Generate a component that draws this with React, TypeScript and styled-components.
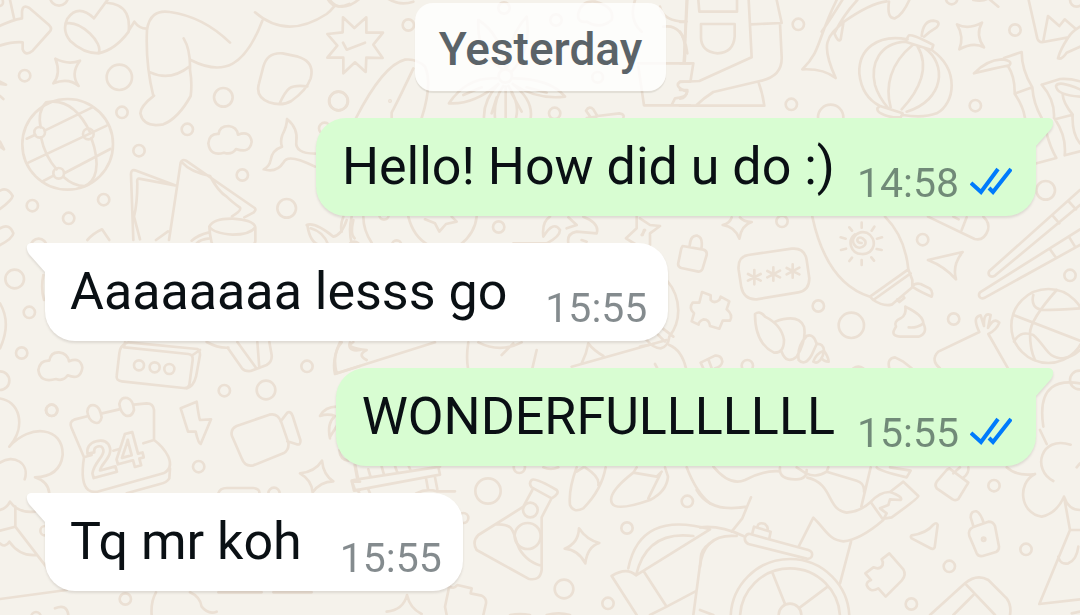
import React from 'react';
import styled, { createGlobalStyle } from 'styled-components';

const GlobalStyle = createGlobalStyle`
  *, *::before, *::after { box-sizing: border-box; }
  body {
    margin: 0;
    background: #f5f2eb;
    font-family: Roboto, "Liberation Sans", sans-serif;
  }
`;

const Screen = styled.main`
  position: relative;
  min-height: 100vh;
  overflow: hidden;
  padding: 3px 44px 23px 45px;
`;

const WallpaperArt = styled.svg`
  position: absolute;
  inset: 0;
  width: 100%;
  height: 100%;
  fill: none;
  stroke: #ebe0d4;
  stroke-width: 8;
  stroke-linecap: round;
  stroke-linejoin: round;
`;

const Thread = styled.div`
  position: relative;
  display: flex;
  flex-direction: column;
  gap: 27px;
`;

const DatePill = styled.h2`
  align-self: center;
  margin: 0;
  padding: 4px 24px 0;
  border-radius: 18px;
  background: rgba(255, 255, 255, 0.8);
  box-shadow: 0 2px 1px rgba(60, 45, 30, 0.1);
  color: #5b6368;
  font-size: 46px;
  font-weight: 500;
  line-height: 84px;
`;

const MessageList = styled.ol`
  display: flex;
  flex-direction: column;
  gap: 27px;
  margin: 0;
  padding: 0;
  list-style: none;
`;

const Bubble = styled.li<{ $sent: boolean }>`
  position: relative;
  display: flex;
  align-items: flex-start;
  align-self: ${(p) => (p.$sent ? 'flex-end' : 'flex-start')};
  gap: ${(p) => (p.$sent ? 22 : 38)}px;
  padding: ${(p) => (p.$sent ? '0 24px 0 26px' : '0 21px 0 25px')};
  border-radius: ${(p) => (p.$sent ? '30px 0 30px 30px' : '0 30px 30px 30px')};
  background: ${(p) => (p.$sent ? '#d8fdd2' : '#ffffff')};
  filter: drop-shadow(0 2px 1px rgba(60, 45, 30, 0.12));
`;

const TailShape = styled.svg<{ $sent: boolean }>`
  position: absolute;
  top: 0;
  width: 20px;
  height: 30px;
  fill: ${(p) => (p.$sent ? '#d8fdd2' : '#ffffff')};
  ${(p) => (p.$sent ? 'right: -18px;' : 'left: -19px; transform: scaleX(-1);')}
`;

const MessageText = styled.p`
  margin: 0;
  color: #0a1014;
  font-size: 52px;
  line-height: 98px;
  white-space: nowrap;
`;

const Meta = styled.div`
  display: flex;
  align-items: center;
  gap: 11px;
  padding-top: 41px;
`;

const Time = styled.time`
  color: rgba(10, 24, 30, 0.5);
  font-size: 41px;
  line-height: 48px;
`;

const Ticks = styled.svg`
  width: 42px;
  height: 28px;
  margin-bottom: 4px;
  fill: none;
  stroke: #007bfc;
  stroke-width: 4;
`;

const circle = (x: number, y: number, r: number) => (
  <circle key={`${x}-${y}`} cx={x} cy={y} r={r} />
);

type Dot = [number, number, number];

const Patch = ({ x, y, dots, paths }: { x: number; y: number; dots: Dot[]; paths: string[] }) => (
  <g transform={`translate(${x} ${y})`}>
    {dots.map(([cx, cy, r]) => circle(cx, cy, r))}
    {paths.map((d) => (
      <path key={d} d={d} />
    ))}
  </g>
);

const Wallpaper = () => (
  <WallpaperArt viewBox="0 0 3240 1845" preserveAspectRatio="xMinYMin slice" aria-hidden="true">
    {/* top left: stocking, globe, map, whale tail */}
    <Patch
      x={0}
      y={0}
      dots={[
        [177, -10, 27], [74, 227, 17], [358, 232, 38], [366, 337, 17], [670, 292, 28], [1015, 303, 28],
        [562, 388, 17], [417, 452, 17], [727, 525, 17], [860, 625, 28], [97, 617, 17], [311, 599, 17],
        [206, 655, 17], [203, 433, 136], [119, 397, 16], [265, 402, 16], [176, 520, 16], [974, 385, 17],
      ]}
      paths={[
        'M-5 80Q35 60 66 55V35Q68 12 88 24L148 76Q158 86 148 96L98 152Q76 170 68 148V127Q40 124 -5 138M30 0L42 55M8 0Q12 15 0 18',
        'M282 55Q235 10 202 56Q185 90 210 122Q250 160 296 160Q345 150 386 95Q392 35 355 17Q338 8 322 9M282 55L328 -8M198 70C245 62 310 130 296 158M386 92L403 65Q418 86 440 86',
        'M460 288Q436 190 441 90Q450 26 510 36Q610 50 690 128M551 115Q572 150 570 210Q577 250 572 288Q535 355 490 373Q430 384 421 340Q422 318 462 287M451 217Q510 245 568 200M572 180C670 230 735 200 787 62M765 37Q860 120 980 42Q990 35 1002 20M982 -5Q1000 32 1048 12',
        'M166 176Q205 196 240 182Q210 222 236 258Q205 232 160 250Q184 220 166 176Z',
        'M790 200Q802 156 848 160L894 170Q945 185 932 235Q920 270 874 303Q845 320 807 307Q765 290 777 250ZM838 312C860 265 868 252 922 259',
        'M122 382Q112 335 138 307Q220 290 272 400M123 412Q135 470 170 508M194 519L331 447M80 416L106 404M134 392L277 322M85 488L320 377M274 414C305 500 286 545 254 558Q220 558 190 530M130 543L162 526',
        'M656 402Q658 378 686 378Q710 380 714 404Q750 390 755 425Q750 462 708 447Q695 466 672 458Q630 470 625 430Q628 400 656 402Z',
        'M861 357Q895 385 889 425Q884 460 945 461M861 357Q861 378 847 405Q840 425 846 440Q816 450 812 480Q808 500 791 508Q830 520 852 485Q865 460 945 500',
        'M400 720L393 525Q392 508 405 511L525 556L417 536Q410 535 412 550Q412 610 402 650L420 718M507 720L542 488Q546 476 558 482L764 624Q770 630 760 638L733 652M547 488Q570 515 630 528Q655 575 680 590Q695 605 720 623Q725 632 696 649M468 720L504 694',
        'M628 680Q640 655 698 656Q762 660 766 682Q750 704 698 704Q640 700 628 680ZM766 682V725Q750 760 740 775M628 680Q630 730 650 765M628 697Q595 704 575 722M628 715Q600 718 590 730',
        'M0 572Q22 560 38 588Q36 600 0 627M0 685Q28 668 40 700Q38 715 0 735M0 440L12 448L0 425M0 245L18 254L0 252M0 288L10 297',
        'M262 720Q280 700 306 688L328 720',
      ]}
    />
    {/* top centre: star badge, flower, ray */}
    <Patch
      x={990}
      y={0}
      dots={[[235, 75, 17], [26, 303, 28], [674, 340, 17], [522, 24, 17], [678, 60, 17], [526, 228, 20], [803, 232, 16], [180, 303, 2]]}
      paths={[
        'M39 52L73 84L109 52V98L159 98L130 134L158 174L109 173L107 216L75 187L40 220V173L-8 173L22 137L-8 102L38 97ZM39 128L50 149L105 128',
        'M78 354Q160 195 225 179Q260 175 285 200Q308 250 275 354M250 205Q215 280 185 338V354M165 -10Q205 20 250 5M0 0Q20 30 60 15Q80 5 90 -5',
        'M500 235Q410 230 357 310Q430 315 505 252M400 285L455 262M548 252Q620 300 705 290Q660 235 548 235M590 262L650 278M505 252Q460 300 462 354M520 258Q490 300 495 354M535 258Q570 310 558 354M548 252Q610 300 602 354M500 292L485 340M545 280L575 335M527 260V354M515 205Q440 170 445 60Q510 100 525 200M532 200Q535 110 590 50Q605 150 545 215',
        'M770 354L800 350M782 352L768 332Q778 316 790 328L802 348L868 340Q885 342 880 354',
        'M745 40Q755 0 795 5Q855 20 845 60Q810 90 770 65Q740 70 745 40M915 0Q895 60 935 95M990 20Q1000 65 1070 65M1000 80Q1060 70 1072 160M925 190H1080M925 200L942 316H1080M1080 245H1050Q1030 260 1072 275Q1070 292 1035 295L1025 315M1072 0L1062 185',
      ]}
    />
    {/* top right: jet pack, fish, lantern, bamboo */}
    <Patch
      x={2040}
      y={0}
      dots={[[355, 73, 17], [334, 313, 17], [886, 317, 17], [1005, 90, 17], [815, -4, 17], [1097, 571, 28], [452, 352, 38], [1190, 0, 20]]}
      paths={[
        'M55 0L58 35H171V0M63 72H164V110Q160 158 113 160Q62 155 63 110ZM20 0L12 186M0 66H14M0 95Q20 120 14 186M0 190H40L32 240M0 246L58 243L215 172L206 0M213 73L305 69L290 0M300 70L305 170Q308 230 240 243L100 276Q70 295 50 315M0 317H253Q248 280 236 248M0 270H22Q20 295 0 296',
        'M470 0C410 120 425 150 367 208Q430 205 467 234C420 130 440 110 492 65Q570 10 620 4M532 0Q490 45 463 100M490 -5Q450 60 425 95M463 100Q475 130 482 118L490 70M627 5Q620 58 645 55Q668 45 688 0M880 0Q910 5 925 -5L955 20',
        'M683 118C590 100 535 150 538 220Q545 290 600 318M675 125C600 130 570 190 585 255Q595 290 625 325M698 135C630 190 615 260 632 322M712 138C750 200 720 270 665 328M735 145C800 190 795 300 680 335M755 150C840 210 825 310 770 340Q730 355 668 345M676 125L685 108Q690 98 760 135L755 150ZM600 318L592 325Q590 342 640 352H662L668 340ZM725 108Q730 62 760 62Q785 65 770 82Q748 95 732 110',
        'M831 73Q865 90 906 68Q885 105 912 142Q880 125 838 148Q853 110 831 73Z',
        'M1046 0L1072 115Q1076 128 1090 126L1165 112Q1140 150 1134 175Q1145 180 1160 158L1200 140M1090 122L1104 48L1138 78L1154 58L1185 85M1165 112Q1175 95 1200 80',
        'M882 220Q920 180 965 178Q1000 182 988 196Q940 205 882 220M972 174L1025 156Q1025 210 1057 262L1004 281Q1005 230 985 200M1057 262Q1060 310 1085 354M1004 281Q1030 320 1035 354M1085 254L1140 237Q1170 235 1200 244M1085 254Q1125 300 1122 354M1200 290Q1130 285 1128 258Q1135 240 1200 268M1148 284Q1150 310 1178 344L1125 358M1178 344Q1175 400 1200 430M1125 358Q1160 410 1154 466L1200 454M1100 400Q1110 440 1129 474L1070 490',
      ]}
    />
    {/* middle left: cloud, ticket, crab */}
    <Patch
      x={0}
      y={660}
      dots={[[44, 177, 28], [88, 277, 17], [65, 399, 17], [155, 571, 17], [673, 512, 17], [798, 510, 28], [921, 439, 17], [417, 436, 15], [464, 442, 15], [508, 447, 15], [116, 80, 24], [0, 482, 28]]}
      paths={[
        'M148 422Q152 396 177 397Q203 400 207 424Q242 410 247 443Q242 482 203 466Q190 485 168 477Q120 490 115 450Q120 420 148 422Z',
        'M375 382L565 402Q580 404 578 420L568 495Q564 506 550 504L365 484Q348 482 350 468L358 400Q360 375 385 367L592 387Q600 390 600 405L588 470Q580 500 560 505M578 405L600 390M375 367L372 382',
        'M620 366Q655 385 685 383M683 383L726 445Q735 455 752 453L800 435Q817 425 815 405L808 366M712 366L770 446M772 366L778 444',
        'M1005 462Q995 420 1020 366M1005 462L1080 438M1080 390Q1050 395 1048 375L1060 366M130 165Q122 205 132 240M0 250Q35 310 0 385',
        'M920 15Q945 5 1000 50Q1025 45 1040 0M922 15Q930 70 960 75M932 25Q970 35 985 75M1060 0Q1050 45 1064 55M1050 70Q1062 60 1075 70',
      ]}
    />
    {/* middle right: lock, pin code, surfboard, shell, basketball */}
    <Patch
      x={1920}
      y={600}
      dots={[[426, 64, 17], [848, 119, 17], [535, 318, 17], [634, 376, 38], [941, 357, 17], [1290, 226, 17], [322, 497, 17], [1225, 378, 111], [1318, 540, 28]]}
      paths={[
        'M128 138L190 149Q202 152 200 165L188 205Q184 217 172 214L124 204Q112 200 115 188L124 145ZM149 137Q152 104 172 107Q190 112 184 147M275 52Q270 70 248 75Q285 80 298 116Q305 75 335 66Q310 65 300 52',
        'M325 165L455 146Q494 142 500 180L508 235Q508 272 475 277L350 298Q312 300 304 262L296 210Q292 170 325 165Z',
        'M343 210V253M324 222L362 242M362 222L324 242M400 202V242M382 213L420 232M420 212L382 232M458 193V233M440 204L478 223M478 203L440 223',
        'M517 50Q560 250 690 290L805 208Q795 110 735 50M690 290L700 300L812 220M700 300Q730 320 755 314L817 262V240L805 208M772 298L778 306L793 294L788 286M818 258Q825 248 842 252L870 266Q880 275 875 290Q840 275 820 262',
        'M665 129C645 130 650 105 668 115C690 130 665 150 648 140C625 120 650 90 680 98C715 115 705 165 665 162C630 160 622 120 645 103M665 68V83M628 82L636 92M602 112L617 116M603 150L618 146M628 183L636 173M665 180V195M702 182L694 172M725 150L710 147M726 112L711 116M703 80L695 92',
        'M864 50L1004 117Q1032 124 1044 90Q1050 68 1030 50M980 52L965 90M940 50L956 58',
        'M864 180L968 156Q936 195 948 238Q915 200 864 180Z',
        'M186 276L212 286V300Q222 312 238 300L242 290L268 304L260 328Q280 345 270 362L248 362L238 386L210 378Q208 358 190 358Q175 365 176 374L155 364L162 340Q145 325 158 308L178 308Z',
        'M345 342Q360 330 375 350Q425 375 432 420Q432 460 402 458Q345 430 345 342ZM405 365Q475 340 492 380Q500 420 470 470Q440 495 425 455M500 408Q522 400 530 432M500 408Q470 440 476 480Q495 500 515 465L530 432Q550 430 552 452Q528 460 520 485Q535 495 548 468L552 452Q565 470 566 485Q552 485 545 475',
        'M796 320Q850 345 850 370Q830 385 806 382M796 320Q800 345 782 355Q760 365 768 380Q748 408 780 410H835Q865 400 850 370',
        'M900 505Q870 480 895 455L1018 396Q995 350 1022 346L1032 378Q1030 335 1052 345L1044 384Q1062 350 1078 368Q1070 390 1045 402L1104 505',
        'M1180 285Q1170 325 1210 330Q1250 330 1320 325M1250 270Q1170 360 1170 400Q1170 450 1185 480M1120 345L1320 422M1122 425Q1140 390 1180 405C1220 440 1220 475 1270 475Q1300 470 1320 450',
        'M1320 -30L1048 213Q1043 222 1050 228Q1058 232 1066 226L1320 15M1238 47L1258 70M1285 3L1308 28M1320 88L1020 277Q1014 285 1020 292Q1026 298 1036 292L1320 135M1230 148L1247 172M1288 112L1305 140',
        'M182 488L225 467Q245 465 247 485Q245 500 225 505M182 488L190 505M205 478L215 505M748 505Q740 475 765 472L790 485L815 505M640 505Q655 495 670 505',
        'M0 55L30 75L60 78L30 100V135M12 90L8 105M80 240C130 300 120 370 88 410Q85 440 62 445Q40 445 20 420M88 435Q125 450 138 505M0 440L40 432M68 385L100 410M55 405L75 425M45 492L52 505',
      ]}
    />
    {/* centre gap between the first two replies */}
    <Patch
      x={960}
      y={600}
      dots={[[536, 81, 17], [192, 45, 14], [230, 135, 14]]}
      paths={[
        'M70 50Q60 75 65 95M95 50Q85 90 95 130M130 50Q130 90 155 128M265 50Q280 110 325 135M470 50Q465 100 420 135M315 58L345 70L358 95L378 72L410 65L395 50M580 130H680Q720 110 720 90Q700 60 670 110Q665 65 690 50M745 130Q740 100 770 95L830 100Q840 70 790 50M745 52L770 75L740 85M785 120L800 125M950 50V85L918 115L950 135M965 105L975 90',
        'M50 520Q35 460 65 427M50 520L345 427M90 427Q80 445 140 450Q110 465 140 480M445 427Q438 470 444 505M475 427Q540 460 605 427M545 465L580 430M650 450L637 505M755 500L1040 420M805 430Q800 460 785 490M805 430Q820 450 850 468',
      ]}
    />
    {/* bottom left: flower, calendar, bolt, camera */}
    <Patch
      x={0}
      y={1080}
      dots={[[155, 151, 17], [596, 320, 17], [822, 400, 17], [376, 717, 17], [108, 770, 14], [135, 512, 14]]}
      paths={[
        'M-5 115C60 120 80 200 28 260C90 190 190 200 188 285Q180 350 105 352Q145 365 148 400M0 308C40 280 90 310 74 358M0 450Q20 445 30 425Q55 460 105 455M46 440V500L0 512M46 500L140 622M0 550Q15 565 28 545Q60 590 110 585M0 717L200 690',
        'M265 168L225 178Q205 185 215 205L252 292Q240 370 265 390Q280 400 300 393L490 340Q520 325 505 290Q490 260 462 240V150Q460 130 440 130L402 134M306 160L358 148M252 292L275 285M340 272L365 265M430 250L462 240M510 325L508 355Q500 368 480 372L380 400',
        'M262 155Q264 132 284 136Q300 140 305 172Q300 195 282 187Q265 180 262 155ZM358 132Q362 110 382 114Q400 120 402 150Q395 172 378 167Q362 160 358 132Z',
        'M542 145L590 125Q597 175 600 180L633 178L602 252Q595 250 587 215H564Z',
        'M710 198L808 164Q832 158 843 184L865 248Q868 270 850 280L760 316Q735 322 725 295L696 228Q690 208 710 198ZM842 184L862 158Q872 152 878 168L901 240Q903 258 888 252L862 244',
        'M900 340Q945 335 966 302Q970 345 1000 364Q960 365 938 397Q935 360 900 340Z',
        'M655 400Q660 384 680 384H760Q780 386 778 400M655 697H785M820 697H935M455 765Q452 725 468 697M570 697Q600 710 605 740Q625 765 650 755M165 745Q200 730 205 765',
        'M1010 140Q975 140 960 168Q985 160 1005 168Q980 190 990 235M1018 270Q1020 300 1045 302M1065 310L1075 360M1056 365H1080M1056 365L1065 390H1080M1025 175L990 230',
      ]}
    />
    <g transform="translate(358 1362) rotate(-15)">
      <text x="-98" y="50" fontFamily="Liberation Sans, sans-serif" fontSize="150" fontWeight="700" fill="#f5f2eb" strokeWidth="8">
        24
      </text>
    </g>
    {/* bottom centre: bench, flask, petals, sparkles */}
    <Patch
      x={1020}
      y={1320}
      dots={[[538, 82, 17], [444, 153, 38], [571, 210, 22], [563, 288, 39], [1042, 184, 17], [861, 264, 17], [672, 447, 28], [804, 490, 17], [370, 234, 15]]}
      paths={[
        'M44 75L52 118L35 122L42 152L300 104L295 80M52 118L300 80M85 88L92 112M125 80L132 104M165 78L172 98M205 75L212 92M54 152L58 160M84 146L90 160M258 115L264 148M285 112L292 148M228 160Q260 145 290 154H345',
        'M575 120Q585 112 650 150Q660 160 635 175L575 142Q565 130 575 120ZM577 150L550 200L415 285Q395 305 410 330L565 416Q600 425 605 390V232L632 180M470 253C550 250 500 310 570 362Q590 375 604 377',
        'M710 82Q685 150 690 195Q700 220 730 205Q785 150 797 82M735 82Q780 110 775 135M710 95L730 82M880 98Q800 160 816 190Q830 215 930 180Q980 155 984 110L975 82M880 98L950 110L965 95M880 98L890 82M962 100L925 175M1040 82Q1070 160 1110 190M610 82Q632 92 655 82',
        'M717 265Q740 300 778 309Q742 320 736 370Q715 330 674 326Q715 310 717 265Z',
        'M140 515Q190 510 201 465Q210 505 245 522M320 525L315 500L328 438Q340 450 352 435L395 445L392 460L425 467Q440 475 438 490L430 525M510 525Q540 520 570 525M620 525Q655 515 690 525',
        'M865 385Q900 210 1110 268L888 406Q920 270 1060 288M888 406Q860 380 815 408L890 525M912 395L980 500L1065 455M930 525L980 500M1110 310Q1080 330 1082 360L1060 525',
      ]}
    />
    {/* bottom right: steering wheel, hand, lock, puzzle piece */}
    <Patch
      x={2100}
      y={1290}
      dots={[[882, 167, 17], [978, 358, 17], [748, 409, 17], [634, 522, 17], [270, 565, 178], [270, 565, 150], [270, 555, 34], [851, 328, 5]]}
      paths={[
        'M40 110Q90 170 135 150Q190 120 240 124M240 112Q235 150 290 148Q320 148 320 120M290 112L318 130Q350 145 380 125L385 112M380 125L470 152Q495 160 492 185M322 143C400 160 380 240 440 248Q480 245 512 216L550 270Q480 330 430 334C385 330 375 295 340 263L296 350M512 112L484 230M512 216Q540 185 570 186Q610 200 602 210L570 208L565 225L540 235L560 250L550 268M570 186L610 155L655 198Q655 205 575 262L552 266',
        'M-10 180Q30 250 140 230M153 202Q135 245 127 265L95 305M0 292Q60 285 130 318M0 410Q10 310 110 318M150 312L325 360Q340 365 335 380Q330 388 320 386L145 342Q132 335 135 322Q140 310 150 312M157 310L162 290L212 305L208 325M172 290Q175 275 195 282Q205 290 203 300M453 335L420 460M218 430L255 522M383 470L300 532M0 540L40 555',
        'M530 112Q535 122 620 142L632 122L570 112',
        'M748 115L805 158L775 207Q768 213 758 208L710 175Q703 165 710 155L740 120ZM760 130L780 112M790 143Q808 130 805 112',
        'M818 292L865 275Q880 275 885 288L897 350Q897 362 888 366L848 378Q835 380 830 370L808 318Q803 300 818 292ZM820 288L812 262Q812 242 830 244Q842 250 850 276',
        'M635 316Q680 310 700 284Q710 275 713 285L704 352Q700 360 690 354L635 325Q630 320 635 316Z',
        'M568 370L610 418Q620 435 605 452L557 500L535 475Q510 490 500 465Q500 455 513 450L496 430L520 412Q540 420 548 405Q550 395 545 388Z',
        'M690 555L795 460Q830 430 865 450L920 505Q935 525 930 555M795 460L885 555M820 495L760 555',
        'M920 112Q950 140 1005 132M1020 0L1040 42M1112 44C1020 15 995 120 1060 153M1005 132C950 160 960 250 1025 260Q1070 250 1092 200Q1105 240 1140 240M1092 200L1110 300L1018 522L1140 508M1110 300H1140M1075 380Q1080 405 1105 400Q1130 390 1135 350M1030 -10C1010 -140 1080 -150 1140 -140M1130 112L1140 100M1115 550L1140 545',
      ]}
    />
  </WallpaperArt>
);

const Tail = ({ sent }: { sent: boolean }) => (
  <TailShape $sent={sent} viewBox="0 0 20 30" aria-hidden="true">
    <path d="M0 0H15Q20 1 19 6Q19 8 17 11L1 29V30H0Z" />
  </TailShape>
);

const DoubleTick = () => (
  <Ticks viewBox="0 0 42 28" role="img" aria-label="Read">
    <path d="M1 16L11 25L28 2M19 21L23 25L41 2" />
  </Ticks>
);

interface Message {
  id: number;
  text: string;
  time: string;
  sent: boolean;
}

const messages: Message[] = [
  { id: 1, text: 'Hello! How did u do :)', time: '14:58', sent: true },
  { id: 2, text: 'Aaaaaaaa lesss go', time: '15:55', sent: false },
  { id: 3, text: 'WONDERFULLLLLLL', time: '15:55', sent: true },
  { id: 4, text: 'Tq mr koh', time: '15:55', sent: false },
];

export default function App() {
  return (
    <Screen>
      <GlobalStyle />
      <Wallpaper />
      <Thread>
        <DatePill>Yesterday</DatePill>
        <MessageList>
          {messages.map((m) => (
            <Bubble key={m.id} $sent={m.sent}>
              <Tail sent={m.sent} />
              <MessageText>{m.text}</MessageText>
              <Meta>
                <Time dateTime={m.time}>{m.time}</Time>
                {m.sent && <DoubleTick />}
              </Meta>
            </Bubble>
          ))}
        </MessageList>
      </Thread>
    </Screen>
  );
}
